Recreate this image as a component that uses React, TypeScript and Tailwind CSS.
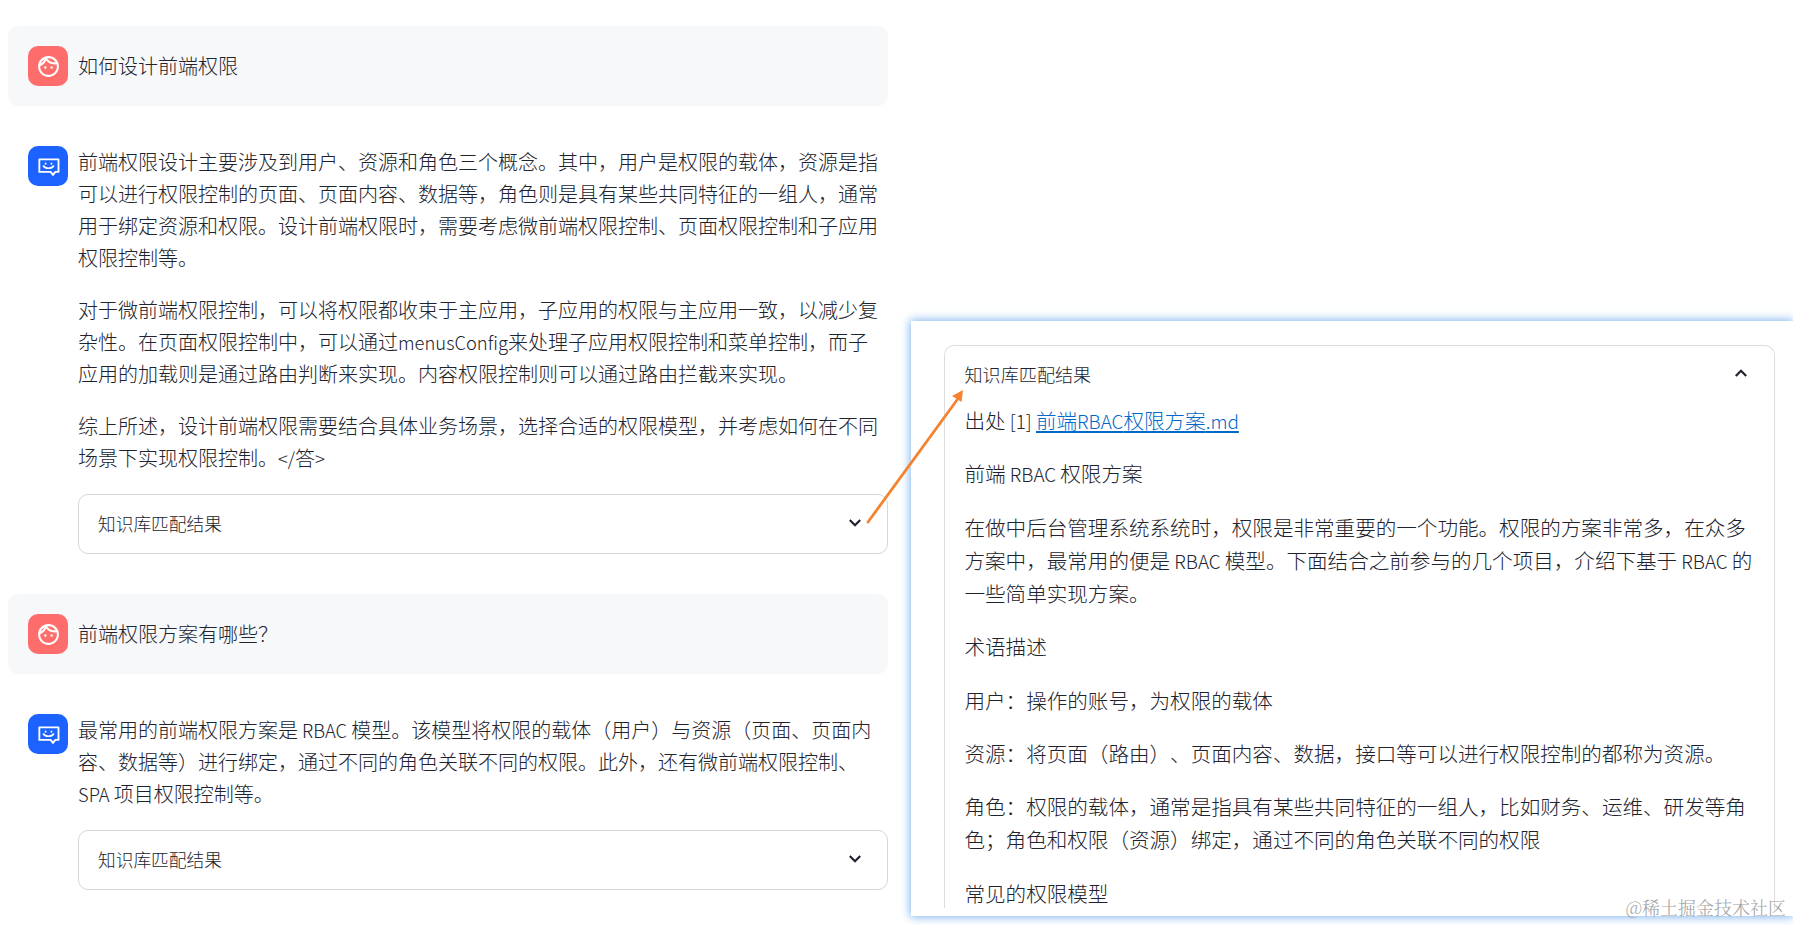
import type { ReactNode } from "react";
import { MdOutlineFace } from "react-icons/md";

const ANSWER_ONE = [
  "前端权限设计主要涉及到用户、资源和角色三个概念。其中，用户是权限的载体，资源是指可以进行权限控制的页面、页面内容、数据等，角色则是具有某些共同特征的一组人，通常用于绑定资源和权限。设计前端权限时，需要考虑微前端权限控制、页面权限控制和子应用权限控制等。",
  "对于微前端权限控制，可以将权限都收束于主应用，子应用的权限与主应用一致，以减少复杂性。在页面权限控制中，可以通过menusConfig来处理子应用权限控制和菜单控制，而子应用的加载则是通过路由判断来实现。内容权限控制则可以通过路由拦截来实现。",
  "综上所述，设计前端权限需要结合具体业务场景，选择合适的权限模型，并考虑如何在不同场景下实现权限控制。</答>",
];

const ANSWER_TWO = [
  "最常用的前端权限方案是 RBAC 模型。该模型将权限的载体（用户）与资源（页面、页面内容、数据等）进行绑定，通过不同的角色关联不同的权限。此外，还有微前端权限控制、SPA 项目权限控制等。",
];

const SOURCE_TEXT = [
  "前端 RBAC 权限方案",
  "在做中后台管理系统系统时，权限是非常重要的一个功能。权限的方案非常多，在众多方案中，最常用的便是 RBAC 模型。下面结合之前参与的几个项目，介绍下基于 RBAC 的一些简单实现方案。",
  "术语描述",
  "用户：操作的账号，为权限的载体",
  "资源：将页面（路由）、页面内容、数据，接口等可以进行权限控制的都称为资源。",
  "角色：权限的载体，通常是指具有某些共同特征的一组人，比如财务、运维、研发等角色；角色和权限（资源）绑定，通过不同的角色关联不同的权限",
  "常见的权限模型",
];

// Latin runs are set slightly smaller than the Chinese around them
const Mixed = ({ text }: { text: string }) => (
  <>
    {text.split(/([ -~]+)/).map((part, i) =>
      i % 2 === 1 ? (
        <span key={i} className="text-[0.918em]">
          {part}
        </span>
      ) : (
        part
      )
    )}
  </>
);

const Chevron = ({ up = false }: { up?: boolean }) => (
  <svg
    viewBox="0 0 12 8"
    className={up ? "mb-0.5 h-2 w-3 rotate-180" : "h-2 w-3"}
    fill="none"
    stroke="currentColor"
    strokeWidth="2.2"
  >
    <path d="M0.8 1 6 6.2 11.2 1" />
  </svg>
);

const BotIcon = () => (
  <svg viewBox="0 0 24 24" className="size-[25px]" fill="none" stroke="currentColor" strokeWidth="1.8">
    <path d="M3.2 5.2h18.4v12h-3l-2.3 2.9-2.3-2.9H3.2z" strokeLinejoin="round" />
    <path d="M6.8 11c1.3 2 3.2 2.7 5.2 2.7s3.9-.7 5.2-2.7" strokeWidth="1.5" />
    <path d="M8.4 9.2h1.6M14 9.2h1.6" strokeWidth="1.7" />
  </svg>
);

const UserMessage = ({ text }: { text: string }) => (
  <div className="flex items-center gap-2.5 rounded-[10px] bg-[#f7f8fa] p-5">
    <div className="flex size-10 shrink-0 items-center justify-center rounded-[10px] bg-[#ff6c6c] text-white">
      <MdOutlineFace className="size-[25px]" />
    </div>
    <p>{text}</p>
  </div>
);

const BotMessage = ({ children }: { children: ReactNode }) => (
  <div className="flex items-start gap-2.5 py-5 pl-5">
    <div className="flex size-10 shrink-0 items-center justify-center rounded-[10px] bg-[#1c62ff] text-white">
      <BotIcon />
    </div>
    <div className="flex min-w-0 flex-1 flex-col gap-5">{children}</div>
  </div>
);

const Expander = () => (
  <div className="flex h-[60px] items-center justify-between rounded-[10px] border border-[#d6d7d9] pr-[26px] pb-[3px] pl-[19px]">
    <span className="text-[17.7px]">知识库匹配结果</span>
    <Chevron />
  </div>
);

const App = () => {
  return (
    <div
      lang="zh-CN"
      className="relative flex h-[925px] w-[1793px] overflow-hidden bg-white font-['Noto_Sans_CJK_SC',sans-serif] font-light text-[#20222d] [text-spacing-trim:space-all]"
    >
      {/* Chat */}
      <main className="ml-2 flex w-[880px] shrink-0 flex-col gap-5 pt-[26px] text-xl leading-8">
        <UserMessage text="如何设计前端权限" />
        <BotMessage>
          {ANSWER_ONE.map((p) => (
            <p key={p} className="pr-1.5">
              <Mixed text={p} />
            </p>
          ))}
          <Expander />
        </BotMessage>
        <UserMessage text="前端权限方案有哪些？" />
        <BotMessage>
          {ANSWER_TWO.map((p) => (
            <p key={p} className="pr-1.5">
              <Mixed text={p} />
            </p>
          ))}
          <Expander />
        </BotMessage>
      </main>

      {/* Matched source */}
      <aside className="mt-[321px] ml-[23px] h-[595px] flex-1 bg-white pt-6 pl-[33px] shadow-[0_0_9px_1px_#7fb4ee]">
        <div className="h-[563px] w-[831px] rounded-t-[10px] border border-b-0 border-[#dcdde0] pt-[11px] pr-[15px] pl-[19.5px] text-[20.57px] leading-[33px]">
          <div className="flex h-[34px] items-center justify-between pr-3">
            <span className="text-[18.1px]">知识库匹配结果</span>
            <Chevron up />
          </div>
          <div className="mt-[13px] flex flex-col gap-[20.4px]">
            <p>
              <Mixed text="出处 [1] " />
              <a href="#" className="text-[#0068c9] underline">
                <Mixed text="前端RBAC权限方案.md" />
              </a>
            </p>
            {SOURCE_TEXT.map((p) => (
              <p key={p}>
                <Mixed text={p} />
              </p>
            ))}
          </div>
        </div>
      </aside>

      {/* Arrow from the collapsed row to its content */}
      <svg className="absolute top-0 left-0 h-full w-full" viewBox="0 0 1793 925">
        <path d="M868 522 957 400" stroke="#f5822f" strokeWidth="2.8" strokeLinecap="round" />
        <path d="M963 390 961.5 402 957 399 952 396z" fill="#f5822f" />
      </svg>

      <span className="absolute right-[7px] bottom-[4px] font-['Noto_Serif_CJK_SC','Noto_Sans_CJK_SC',serif] text-lg text-[#a3a3a3]">
        @稀土掘金技术社区
      </span>
    </div>
  );
};

export default App;
